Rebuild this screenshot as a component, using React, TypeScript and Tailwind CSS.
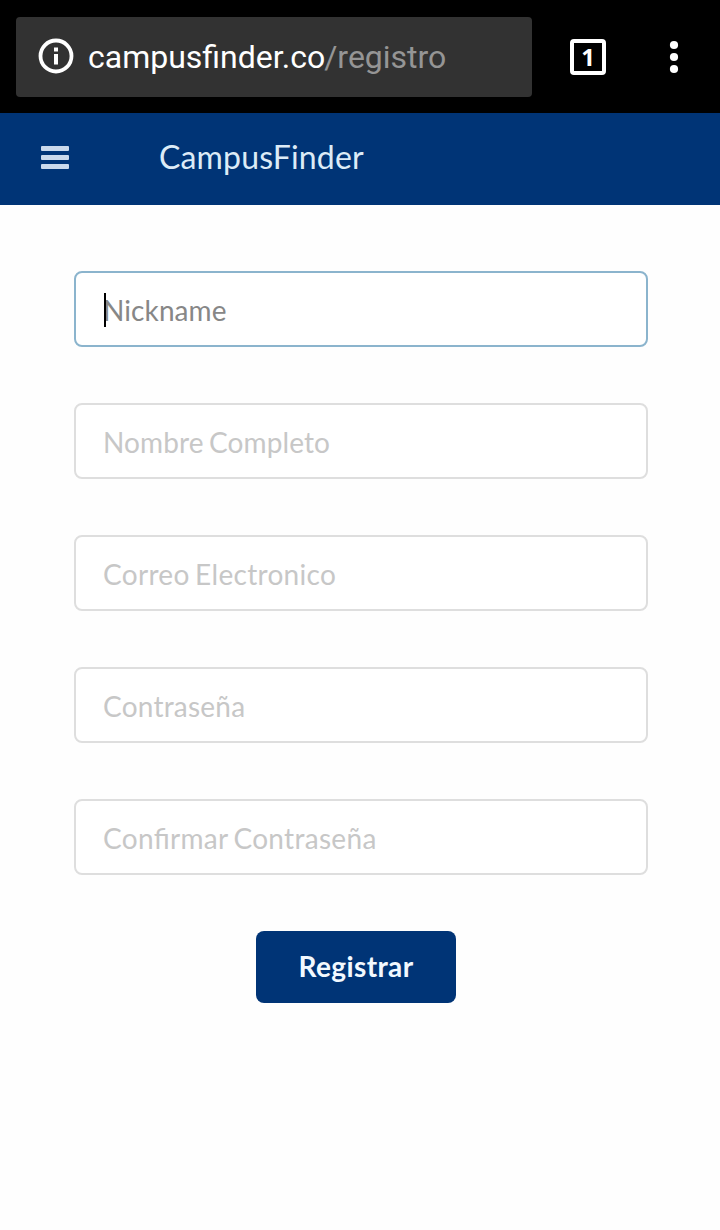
const fields = [
  { label: "Nombre Completo", spacing: "tracking-[0.12px] [word-spacing:-2px]" },
  { label: "Correo Electronico", spacing: "tracking-[0.31px] [word-spacing:-2px]" },
  { label: "Contraseña", spacing: "tracking-[0.22px]" },
  { label: "Confirmar Contraseña", spacing: "tracking-[0.31px] [word-spacing:-2px]" },
];

export default function App() {
  return (
    <div className="flex h-[1230px] w-[720px] flex-col overflow-hidden bg-[#fefefe] font-['Lato',sans-serif]">
      <header className="flex h-[113px] shrink-0 bg-black pl-4 pt-[17px] font-['Roboto',sans-serif]">
        <div className="flex h-20 w-[516px] items-center rounded-[4px] bg-[#323232] pl-[22px]">
          <svg className="-mt-0.5 h-9 w-9" viewBox="0 0 36 36" fill="none" stroke="#fff">
            <circle cx="18" cy="18" r="15.5" strokeWidth="3.8" />
            <path d="M18 16v10.5M18 9.5v4" strokeWidth="4" />
          </svg>
          <span className="-mt-px ml-[14px] text-[32px] leading-10 whitespace-nowrap text-white">
            campusfinder.co<span className="-ml-px text-[#959595]">/registro</span>
          </span>
        </div>
        <div className="ml-[38px] mt-[22px] flex h-9 w-9 items-center justify-center rounded-[4px] border-4 border-white text-white">
          <span className="font-['Noto_Sans',sans-serif] text-[24px] font-bold leading-7">1</span>
        </div>
        <svg className="ml-[62px] mt-[22px] h-9 w-3" viewBox="0 0 12 36" fill="#fff">
          <circle cx="6" cy="6" r="4.1" />
          <circle cx="6" cy="18" r="4.1" />
          <circle cx="6" cy="30" r="4.1" />
        </svg>
      </header>
      <nav className="flex h-[92px] shrink-0 items-center bg-[#003476] pl-[41px]">
        <svg className="-mt-[3px] h-[23px] w-7" viewBox="0 0 28 23" fill="#cad9ec">
          <rect y="0" width="28" height="5" rx="1" />
          <rect y="9" width="28" height="5" rx="1" />
          <rect y="18" width="28" height="5" rx="1" />
        </svg>
        <span className="-mt-1 ml-[90px] text-[32px] leading-10 tracking-[0.17px] text-[#dcebf7]">CampusFinder</span>
      </nav>
      <main className="flex flex-col gap-14 pl-[74px] pt-[66px]">
        <div className="flex h-[76px] w-[574px] items-center rounded-[8px] border-2 border-[#8bb4cd] bg-white pl-7">
          <span className="z-10 mt-0.5 h-[34px] w-0.5 bg-black" />
          <span className="-ml-[3px] mt-0.5 text-[28px] leading-9 tracking-[0.1px] text-[#878787]">Nickname</span>
        </div>
        {fields.map(({ label, spacing }) => (
          <div key={label} className="flex h-[76px] w-[574px] items-center rounded-[8px] border-2 border-[#dedede] bg-white pl-[27px]">
            <span className={`mt-0.5 text-[28px] leading-9 text-[#c7c7c7] [font-feature-settings:'liga'] ${spacing}`}>{label}</span>
          </div>
        ))}
        <button className="ml-[182px] flex h-[72px] w-[200px] items-center justify-center rounded-[8px] bg-[#003476] pb-0.5 text-[28px] font-bold tracking-[0.4px] text-[#f2f9ff]">Registrar</button>
      </main>
    </div>
  );
}
